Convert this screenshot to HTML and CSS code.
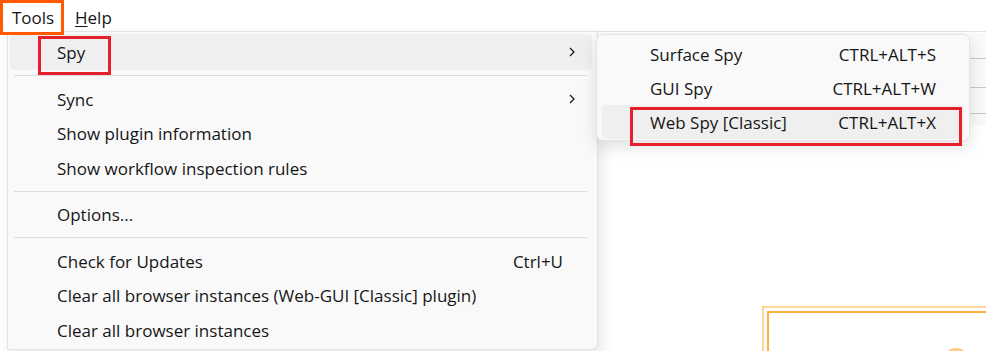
FILE: index.html
```html
<!DOCTYPE html>
<html>
<head>
<meta charset="utf-8">
<link rel="stylesheet" href="styles.css">
</head>
<body>
<div class="page">
  <div class="menubar">
    <div class="mb-item tools">Tools</div>
    <div class="mb-item help"><u>H</u>elp</div>
  </div>

  <div class="backpanel">
    <div class="bp-line"></div>
    <div class="bp-line"></div>
    <div class="bp-line"></div>
  </div>

  <div class="canvas-frame"><div class="canvas-inner"></div></div>
  <div class="canvas-blob"></div>

  <div class="dropdown">
    <div class="row active">
      <span class="label">Spy</span>
      <svg class="chev" width="8" height="12" viewBox="0 0 8 12"><path d="M2 2 L6 6 L2 10" fill="none" stroke="#1b1b1b" stroke-width="1.3"/></svg>
    </div>
    <div class="sep"></div>
    <div class="row">
      <span class="label">Sync</span>
      <svg class="chev" width="8" height="12" viewBox="0 0 8 12"><path d="M2 2 L6 6 L2 10" fill="none" stroke="#1b1b1b" stroke-width="1.3"/></svg>
    </div>
    <div class="row"><span class="label">Show plugin information</span></div>
    <div class="row"><span class="label">Show workflow inspection rules</span></div>
    <div class="sep"></div>
    <div class="row"><span class="label">Options...</span></div>
    <div class="sep"></div>
    <div class="row"><span class="label">Check for Updates</span><span class="key">Ctrl+U</span></div>
    <div class="row"><span class="label">Clear all browser instances (Web-GUI [Classic] plugin)</span></div>
    <div class="row"><span class="label">Clear all browser instances</span></div>
    <div class="mark mark-spy"></div>
  </div>

  <div class="submenu">
    <div class="srow"><span class="label">Surface Spy</span><span class="skey">CTRL+ALT+S</span></div>
    <div class="srow"><span class="label">GUI Spy</span><span class="skey">CTRL+ALT+W</span></div>
    <div class="srow active"><span class="label">Web Spy [Classic]</span><span class="skey">CTRL+ALT+X</span></div>
    <div class="mark mark-web"></div>
  </div>
</div>
</body>
</html>
```

FILE: styles.css
```css
html, body {
  margin: 0;
  padding: 0;
  background: #ffffff;
}
body {
  font-family: "Open Sans", "Noto Sans", sans-serif;
  font-size: 17px;
  color: #161616;
}
.page {
  position: relative;
  width: 986px;
  height: 351px;
  overflow: hidden;
}
.menubar {
  display: flex;
  height: 31px;
  border-bottom: 1px solid #e3e3e3;
  background: #ffffff;
}
.mb-item {
  height: 31px;
  line-height: 31px;
  box-sizing: border-box;
}
.tools {
  position: relative;
  z-index: 5;
  width: 64px;
  height: 35px;
  line-height: 30px;
  padding-left: 9px;
  border: 3px solid #ff5a00;
  background: #ffffff;
}
.help {
  padding-left: 11px;
  line-height: 35px;
}
.help u {
  text-decoration-thickness: 1px;
  text-underline-offset: 2px;
}

/* background panel behind the submenu */
.backpanel {
  position: absolute;
  left: 600px;
  top: 33px;
  width: 386px;
  height: 92px;
  background: #f9f9f9;
  display: flex;
  flex-direction: column;
  padding-top: 25px;
  gap: 28px;
  box-sizing: border-box;
}
.bp-line {
  height: 1px;
  background: #c9c9c9;
}
.bp-line:last-child { margin-top: -3px; }

.canvas-frame {
  position: absolute;
  left: 762px;
  top: 306px;
  width: 240px;
  height: 60px;
  border: 2px solid #ffd59a;
  box-sizing: border-box;
}
.canvas-inner {
  margin: 3px 0 0 3px;
  height: 60px;
  border-top: 2px solid #ffb13d;
  border-left: 2px solid #ffb13d;
}
.canvas-blob {
  position: absolute;
  left: 948px;
  top: 348px;
  width: 16px;
  height: 8px;
  border-radius: 50%;
  background: #ffc98a;
}

/* main dropdown */
.dropdown {
  position: absolute;
  left: 7px;
  top: 31px;
  width: 591px;
  height: 319px;
  box-sizing: border-box;
  background: #f9f9f9;
  border: 1px solid #e1e1e1;
  border-radius: 0 0 7px 0;
  padding-top: 2px;
  box-shadow: 4px 6px 14px rgba(0, 0, 0, 0.10);
  display: flex;
  flex-direction: column;
}
.row {
  position: relative;
  display: flex;
  align-items: center;
  height: 34.5px;
  flex: none;
  margin: 0 5px 0 2px;
  padding: 0 29px 0 47px;
  border-radius: 4px;
}
.row.active {
  height: 36px;
  background: #efefef;
}
.label {
  flex: 1;
  white-space: nowrap;
}
.chev {
  margin-right: -13px;
}
.key {
  white-space: nowrap;
}
.sep {
  flex: none;
  height: 1px;
  background: #dedede;
  margin: 5px 10px 6px 6px;
}
.mark {
  position: absolute;
  border: 3px solid #e5202a;
  box-sizing: border-box;
  pointer-events: none;
}
.mark-spy {
  left: 30px;
  top: 4px;
  width: 73px;
  height: 39px;
}

/* submenu */
.submenu {
  position: absolute;
  left: 596px;
  top: 34px;
  width: 374px;
  height: 107px;
  box-sizing: border-box;
  background: #f9f9f9;
  border: 1px solid #e5e5e5;
  border-radius: 7px;
  padding-top: 2px;
  box-shadow: 0 6px 16px rgba(0, 0, 0, 0.12);
  display: flex;
  flex-direction: column;
  z-index: 3;
}
.srow {
  display: flex;
  align-items: center;
  height: 34px;
  flex: none;
  margin: 0 5px;
  padding: 0 28px 0 48px;
  border-radius: 4px;
}
.srow.active {
  background: #efefef;
}
.skey {
  white-space: nowrap;
}
.mark-web {
  left: 33px;
  top: 72px;
  width: 332px;
  height: 39px;
}
```
